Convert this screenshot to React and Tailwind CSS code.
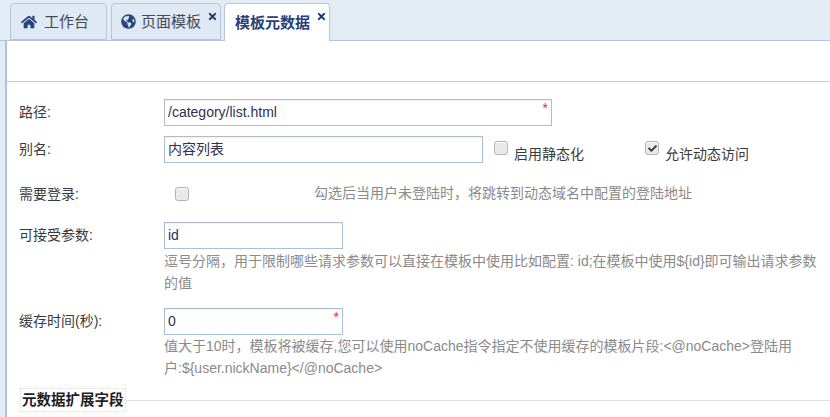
import React from 'react';
import { FaHome, FaGlobeAmericas, FaTimes, FaCheck } from 'react-icons/fa';

const font = 'font-["Liberation_Sans","Noto_Sans_CJK_SC",sans-serif]';

const Tab = ({ icon, label, width, active, closable }) => (
  <div
    className={`relative flex items-center h-[37px] border border-[#b5c6dc] rounded-t-[4px] ${width} ${
      active ? 'bg-white border-b-0 h-[38px] font-bold text-[#2b3f78] pl-[10px] z-10 -mb-px' : 'bg-[#dfe8f3] text-[#3f4a5c] pl-[10px]'
    }`}
  >
    {icon}
    <span className="text-[15px] leading-none">{label}</span>
    {closable && <FaTimes className="absolute top-[7px] right-[2px] text-[#1f3f77]" size={11} />}
  </div>
);

const Star = ({ right }) => (
  <span className={`absolute top-[1px] ${right} text-[14px] leading-[14px] text-[#e8283c]`}>*</span>
);

const Input = ({ value, width, star }) => (
  <div className={`relative h-[27px] ${width} border border-[#a9c0dc] border-t-[#aebccb] border-l-[#aebccb] bg-white px-[3px] text-[14px] leading-[25px] text-[#33304f] shadow-[inset_0_1px_1px_#eef1f5]`}>
    {value}
    {star && <Star right="right-[3px]" />}
  </div>
);

const Checkbox = ({ checked }) => (
  <span className="flex items-center justify-center w-[14px] h-[14px] rounded-[3px] border border-[#b4b4b4] bg-[#e9e9e9] shadow-[inset_0_1px_1px_#ffffff]">
    {checked && <FaCheck size={9} className="text-[#333333]" />}
  </span>
);

const Label = ({ children }) => (
  <div className="w-[145px] shrink-0 text-[14px] leading-[26px] text-[#3a3a3a]">{children}</div>
);

const Hint = ({ children }) => (
  <div className="w-[655px] text-[14px] leading-[22px] text-[#8a8a8a] break-all">{children}</div>
);

export default function App() {
  return (
    <div className={`w-[830px] h-[417px] overflow-hidden bg-white flex flex-col ${font}`}>
      <div className="h-[41px] shrink-0 flex items-end pl-[10px] bg-[#e3ebf5] border-b border-[#b5c6dc]">
        <Tab
          width="w-[97px]"
          label="工作台"
          icon={<FaHome size={16} className="text-[#27457f] mr-[7px]" />}
        />
        <div className="ml-[4px]">
          <Tab
            width="w-[110px]"
            label="页面模板"
            closable
            icon={<FaGlobeAmericas size={15} className="text-[#27457f] mr-[5px] -ml-[1px]" />}
          />
        </div>
        <div className="ml-[3px]">
          <Tab width="w-[106px]" label="模板元数据" active closable />
        </div>
      </div>

      <div className="flex flex-1 min-h-0">
        <div className="w-[7px] shrink-0 bg-[#e3ebf5] border-r-[2px] border-[#a9c3e6]" />
        <div className="flex-1 min-w-0">
          <div className="h-[41px] border-b border-[#b8cde8]" />

          <div className="pl-[12px] pt-[17px]">
            <div className="flex">
              <Label>路径:</Label>
              <Input value="/category/list.html" width="w-[388px]" star />
            </div>

            <div className="flex mt-[10px]">
              <Label>别名:</Label>
              <Input value="内容列表" width="w-[319px]" />
              <div className="flex items-start ml-[11px] pt-[5px]">
                <Checkbox />
                <span className="ml-[6px] pt-[3px] text-[14px] leading-[20px] text-[#3a3a3a]">启用静态化</span>
              </div>
              <div className="flex items-start ml-[61px] pt-[5px]">
                <Checkbox checked />
                <span className="ml-[6px] pt-[3px] text-[14px] leading-[20px] text-[#3a3a3a]">允许动态访问</span>
              </div>
            </div>

            <div className="flex mt-[16px] h-[27px] items-center">
              <Label>需要登录:</Label>
              <div className="ml-[11px]">
                <Checkbox />
              </div>
              <span className="ml-[125px] text-[14px] text-[#8a8a8a]">勾选后当用户未登陆时，将跳转到动态域名中配置的登陆地址</span>
            </div>

            <div className="flex mt-[15px]">
              <Label>可接受参数:</Label>
              <div>
                <Input value="id" width="w-[179px]" />
                <div className="mt-[1px]">
                  <Hint>{'逗号分隔，用于限制哪些请求参数可以直接在模板中使用比如配置: id;在模板中使用${id}即可输出请求参数的值'}</Hint>
                </div>
              </div>
            </div>

            <div className="flex mt-[14px]">
              <Label>缓存时间(秒):</Label>
              <div>
                <Input value="0" width="w-[179px]" star />
                <div>
                  <Hint>{'值大于10时，模板将被缓存,您可以使用noCache指令指定不使用缓存的模板片段:<@noCache>登陆用户:${user.nickName}</@noCache>'}</Hint>
                </div>
              </div>
            </div>

            <div className="flex items-center mt-[9px] ml-[1px]">
              <span className="px-[1px] text-[14.5px] leading-[22px] font-bold text-[#1f1f1f] border border-dotted border-[#d5dde8]">元数据扩展字段</span>
              <div className="flex-1 h-px bg-[#e0e0e0]" />
            </div>
          </div>
        </div>
      </div>
    </div>
  );
}
